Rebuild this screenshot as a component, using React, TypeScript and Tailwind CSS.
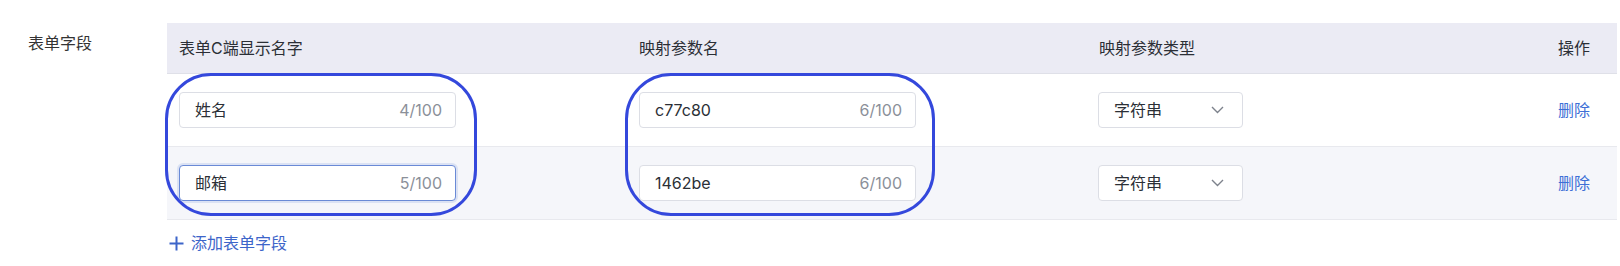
import React from "react";

type Row = {
  name: string;
  nameCount: number;
  key: string;
  keyCount: number;
  type: string;
  focused?: boolean;
};

const ROWS: Row[] = [
  { name: "姓名", nameCount: 4, key: "c77c80", keyCount: 6, type: "字符串" },
  {
    name: "邮箱",
    nameCount: 5,
    key: "1462be",
    keyCount: 6,
    type: "字符串",
    focused: true,
  },
];

const FONT = "font-['Inter','Noto_Sans_CJK_SC',sans-serif]";

export default function App() {
  return (
    <div
      className={`relative flex h-[266px] w-[1620px] bg-white pt-[23px] text-[16px] text-[#2b2f36] ${FONT}`}
    >
      <div className="w-[167px] shrink-0 pl-[28px] pt-[8px] leading-[24px] text-[#333]">
        表单字段
      </div>

      <div className="mr-[3px] flex-1">
        <div className="grid grid-cols-[460px_460px_1fr_auto]">
          {/* header */}
          <HeaderCell>表单C端显示名字</HeaderCell>
          <HeaderCell>映射参数名</HeaderCell>
          <HeaderCell>映射参数类型</HeaderCell>
          <HeaderCell right>操作</HeaderCell>

          {ROWS.map((r, i) => (
            <RowCells key={r.key} row={r} striped={i % 2 === 1} />
          ))}
        </div>

        <button className="mt-[11px] flex items-center gap-[7px] pl-[2px] leading-[24px] text-[#3d65c9]">
          <svg width="15" height="15" viewBox="0 0 15 15" fill="none">
            <path
              d="M7.5 0.5v14M0.5 7.5h14"
              stroke="currentColor"
              strokeWidth="2"
            />
          </svg>
          添加表单字段
        </button>
      </div>

      {/* annotation outlines */}
      <div className="pointer-events-none absolute left-[165px] top-[73px] h-[143px] w-[312px] rounded-[46px] border-[3px] border-[#3448dc]" />
      <div className="pointer-events-none absolute left-[625px] top-[73px] h-[143px] w-[310px] rounded-[46px] border-[3px] border-[#3448dc]" />
    </div>
  );
}

function HeaderCell({
  children,
  right,
}: {
  children: React.ReactNode;
  right?: boolean;
}) {
  return (
    <div
      className={`flex h-[51px] items-center border-b border-[#dfe0e8] bg-[#ebebf4] text-[#2b2f36] ${
        right ? "justify-end pr-[27px]" : "pl-[12px]"
      }`}
    >
      {children}
    </div>
  );
}

function RowCells({ row, striped }: { row: Row; striped: boolean }) {
  const bg = striped ? "bg-[#f5f6fa]" : "bg-white";
  const cell = `flex h-[73px] items-center border-b border-[#e8e9ee] ${bg}`;
  return (
    <>
      <div className={`${cell} pl-[12px]`}>
        <TextInput value={row.name} count={row.nameCount} focused={row.focused} />
      </div>
      <div className={`${cell} pl-[12px]`}>
        <TextInput value={row.key} count={row.keyCount} />
      </div>
      <div className={`${cell} pl-[11px]`}>
        <div className="flex h-[36px] w-[145px] items-center justify-between rounded-[4px] border border-[#dcdee5] bg-white pl-[15px] pr-[18px] text-[#2b2f36]">
          <span>{row.type}</span>
          <svg width="13" height="8" viewBox="0 0 13 8" fill="none">
            <path
              d="M1 1l5.5 5.5L12 1"
              stroke="#7d828c"
              strokeWidth="1.4"
            />
          </svg>
        </div>
      </div>
      <div className={`${cell} justify-end pr-[27px]`}>
        <button className="text-[#3d6fd6]">删除</button>
      </div>
    </>
  );
}

function TextInput({
  value,
  count,
  focused,
}: {
  value: string;
  count: number;
  focused?: boolean;
}) {
  return (
    <div
      className={`flex h-[36px] w-[277px] items-center justify-between rounded-[4px] border bg-white pl-[15px] pr-[13px] ${
        focused
          ? "border-[#6a8ad6] shadow-[0_0_0_2px_rgba(106,138,214,0.18)]"
          : "border-[#dcdee5]"
      }`}
    >
      <span className="text-[#2b2f36]">{value}</span>
      <span className="text-[#8b9099]">{count}/100</span>
    </div>
  );
}
